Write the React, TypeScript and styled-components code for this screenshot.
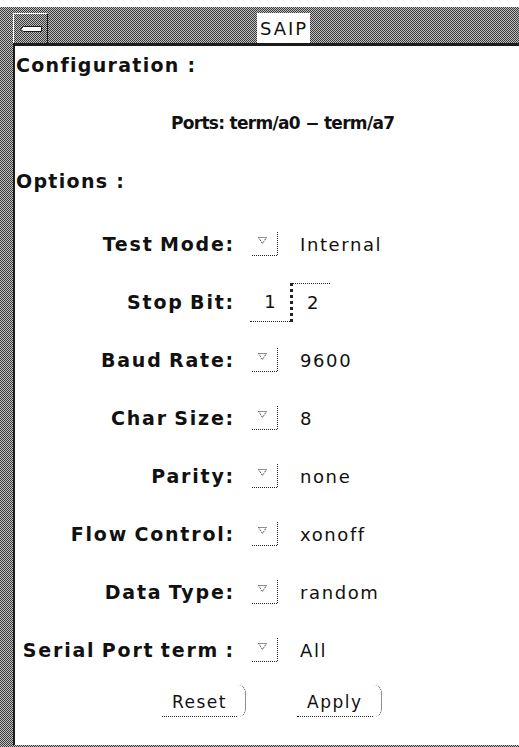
import styled, { createGlobalStyle } from "styled-components";

// 2px checker used for the window frame and the title bar
const stipple = `repeating-conic-gradient(#3a3a3a 0 25%, #c0c0c0 0 50%) 0 0 / 2px 2px`;

const GlobalStyle = createGlobalStyle`
  html, body {
    margin: 0;
    padding: 0;
    background: #ffffff;
  }
  body {
    width: 519px;
    height: 747px;
    overflow: hidden;
  }
`;

const Frame = styled.div`
  margin-top: 7px;
  width: 519px;
  height: 740px;
  box-sizing: border-box;
  padding: 6px 0 2px 13px;
  background: ${stipple};
  display: flex;
  flex-direction: column;
`;

const TitleBar = styled.div`
  height: 30px;
  border-bottom: 3px solid #1c1c1c;
  display: grid;
  grid-template-columns: 35px 1fr;
  align-items: stretch;
`;

const CloseBox = styled.div`
  display: flex;
  align-items: center;
  justify-content: center;
  border-left: 1px solid #ffffff;
  border-top: 1px solid #ffffff;
  border-right: 1px solid #1c1c1c;
`;

const TitleCell = styled.div`
  display: flex;
  justify-content: center;
`;

const Title = styled.div`
  background: #ffffff;
  padding: 0 2px 0 3px;
  display: flex;
  align-items: center;
  font-family: "DejaVu Sans", sans-serif;
  font-size: 18px;
  letter-spacing: 2px;
  color: #111;
`;

const Panel = styled.div`
  flex: 1;
  background: #ffffff;
  border-left: 2px solid #1c1c1c;
  display: flex;
  flex-direction: column;
  gap: 38px;
  padding-top: 9px;
  color: #111;
`;

const Heading = styled.div<{ $indent?: number; $after?: number; $tight?: boolean }>`
  height: 20px;
  line-height: 20px;
  padding-left: ${(p) => p.$indent ?? 1}px;
  margin-bottom: ${(p) => p.$after ?? 0}px;
  font-family: "DejaVu Sans", sans-serif;
  font-weight: bold;
  font-size: ${(p) => (p.$tight ? 17 : 19)}px;
  letter-spacing: ${(p) => (p.$tight ? -0.7 : 1.3)}px;
  white-space: nowrap;
`;

const Row = styled.div`
  height: 20px;
  display: flex;
  align-items: center;
`;

const Label = styled.div`
  width: 220px;
  text-align: right;
  font-family: "DejaVu Sans", sans-serif;
  font-weight: bold;
  font-size: 19px;
  letter-spacing: 1.8px;
  word-spacing: -2px;
  white-space: nowrap;
`;

const Control = styled.div`
  margin-left: 17px;
  display: flex;
  align-items: center;
`;

const Value = styled.div`
  margin-left: 22px;
  font-family: "DejaVu Sans", sans-serif;
  font-size: 18px;
  letter-spacing: 1.6px;
  white-space: nowrap;
`;

const Choice = styled.div`
  display: flex;
  height: 39px;
  margin-left: -2px;
`;

const ChoiceItem = styled.div<{ $selected?: boolean }>`
  width: 40px;
  box-sizing: border-box;
  display: flex;
  align-items: center;
  justify-content: ${(p) => (p.$selected ? "flex-start" : "center")};
  padding-left: ${(p) => (p.$selected ? "14px" : "0")};
  font-family: "DejaVu Sans", sans-serif;
  font-size: 18px;
  border-bottom: ${(p) => (p.$selected ? "none" : "1px dotted #222")};
  border-top: ${(p) => (p.$selected ? "1px dotted #222" : "none")};
  border-left: ${(p) => (p.$selected ? "3px dotted #222" : "none")};
`;

const ButtonRow = styled.div`
  height: 20px;
  margin-top: -4px;
  padding-left: 147px;
  display: flex;
  align-items: center;
  gap: 60px;
`;

const Button = styled.span`
  position: relative;
  display: inline-block;
  padding: 0 10px 4px 10px;
  border-bottom: 1px dotted #222;
  font-family: "DejaVu Sans", sans-serif;
  font-size: 17px;
  letter-spacing: 1.5px;

  &::after {
    content: "";
    position: absolute;
    right: -9px;
    top: -7px;
    bottom: -1px;
    width: 7px;
    border-right: 1px dotted #222;
    border-radius: 0 12px 12px 0;
  }
`;

const MenuMark = () => (
  <svg width="26" height="24" viewBox="0 0 26 24">
    <path d="M25.5 0V23.5H0" fill="none" stroke="#222" strokeDasharray="1 1" />
    <path
      d="M6.5 5.5H14.5L10.5 11.5Z"
      fill="none"
      stroke="#222"
      strokeDasharray="1 1"
    />
  </svg>
);

const CloseGlyph = () => (
  <svg width="24" height="8" viewBox="0 0 24 8">
    <path d="M1.5 4.5L4.5 1.5H22.5V6.5H4.5Z" fill="#ffffff" stroke="#1c1c1c" />
  </svg>
);

type Field = { label: string; value: string };

const fields: Field[] = [
  { label: "Baud Rate:", value: "9600" },
  { label: "Char Size:", value: "8" },
  { label: "Parity:", value: "none" },
  { label: "Flow Control:", value: "xonoff" },
  { label: "Data Type:", value: "random" },
  { label: "Serial Port term :", value: "All" },
];

const MenuRow = ({ label, value }: Field) => (
  <Row>
    <Label>{label}</Label>
    <Control>
      <MenuMark />
    </Control>
    <Value>{value}</Value>
  </Row>
);

export default function App() {
  return (
    <>
      <GlobalStyle />
      <Frame>
        <TitleBar>
          <CloseBox>
            <CloseGlyph />
          </CloseBox>
          <TitleCell>
            <Title>SAIP</Title>
          </TitleCell>
        </TitleBar>
        <Panel>
          <Heading>Configuration :</Heading>
          <Heading $indent={156} $tight>
            Ports: term/a0 − term/a7
          </Heading>
          <Heading $after={5}>Options :</Heading>
          <MenuRow label="Test Mode:" value="Internal" />
          <Row>
            <Label>Stop Bit:</Label>
            <Control>
              <Choice>
                <ChoiceItem>1</ChoiceItem>
                <ChoiceItem $selected>2</ChoiceItem>
              </Choice>
            </Control>
          </Row>
          {fields.map((f) => (
            <MenuRow key={f.label} {...f} />
          ))}
          <ButtonRow>
            <Button>Reset</Button>
            <Button>Apply</Button>
          </ButtonRow>
        </Panel>
      </Frame>
    </>
  );
}
